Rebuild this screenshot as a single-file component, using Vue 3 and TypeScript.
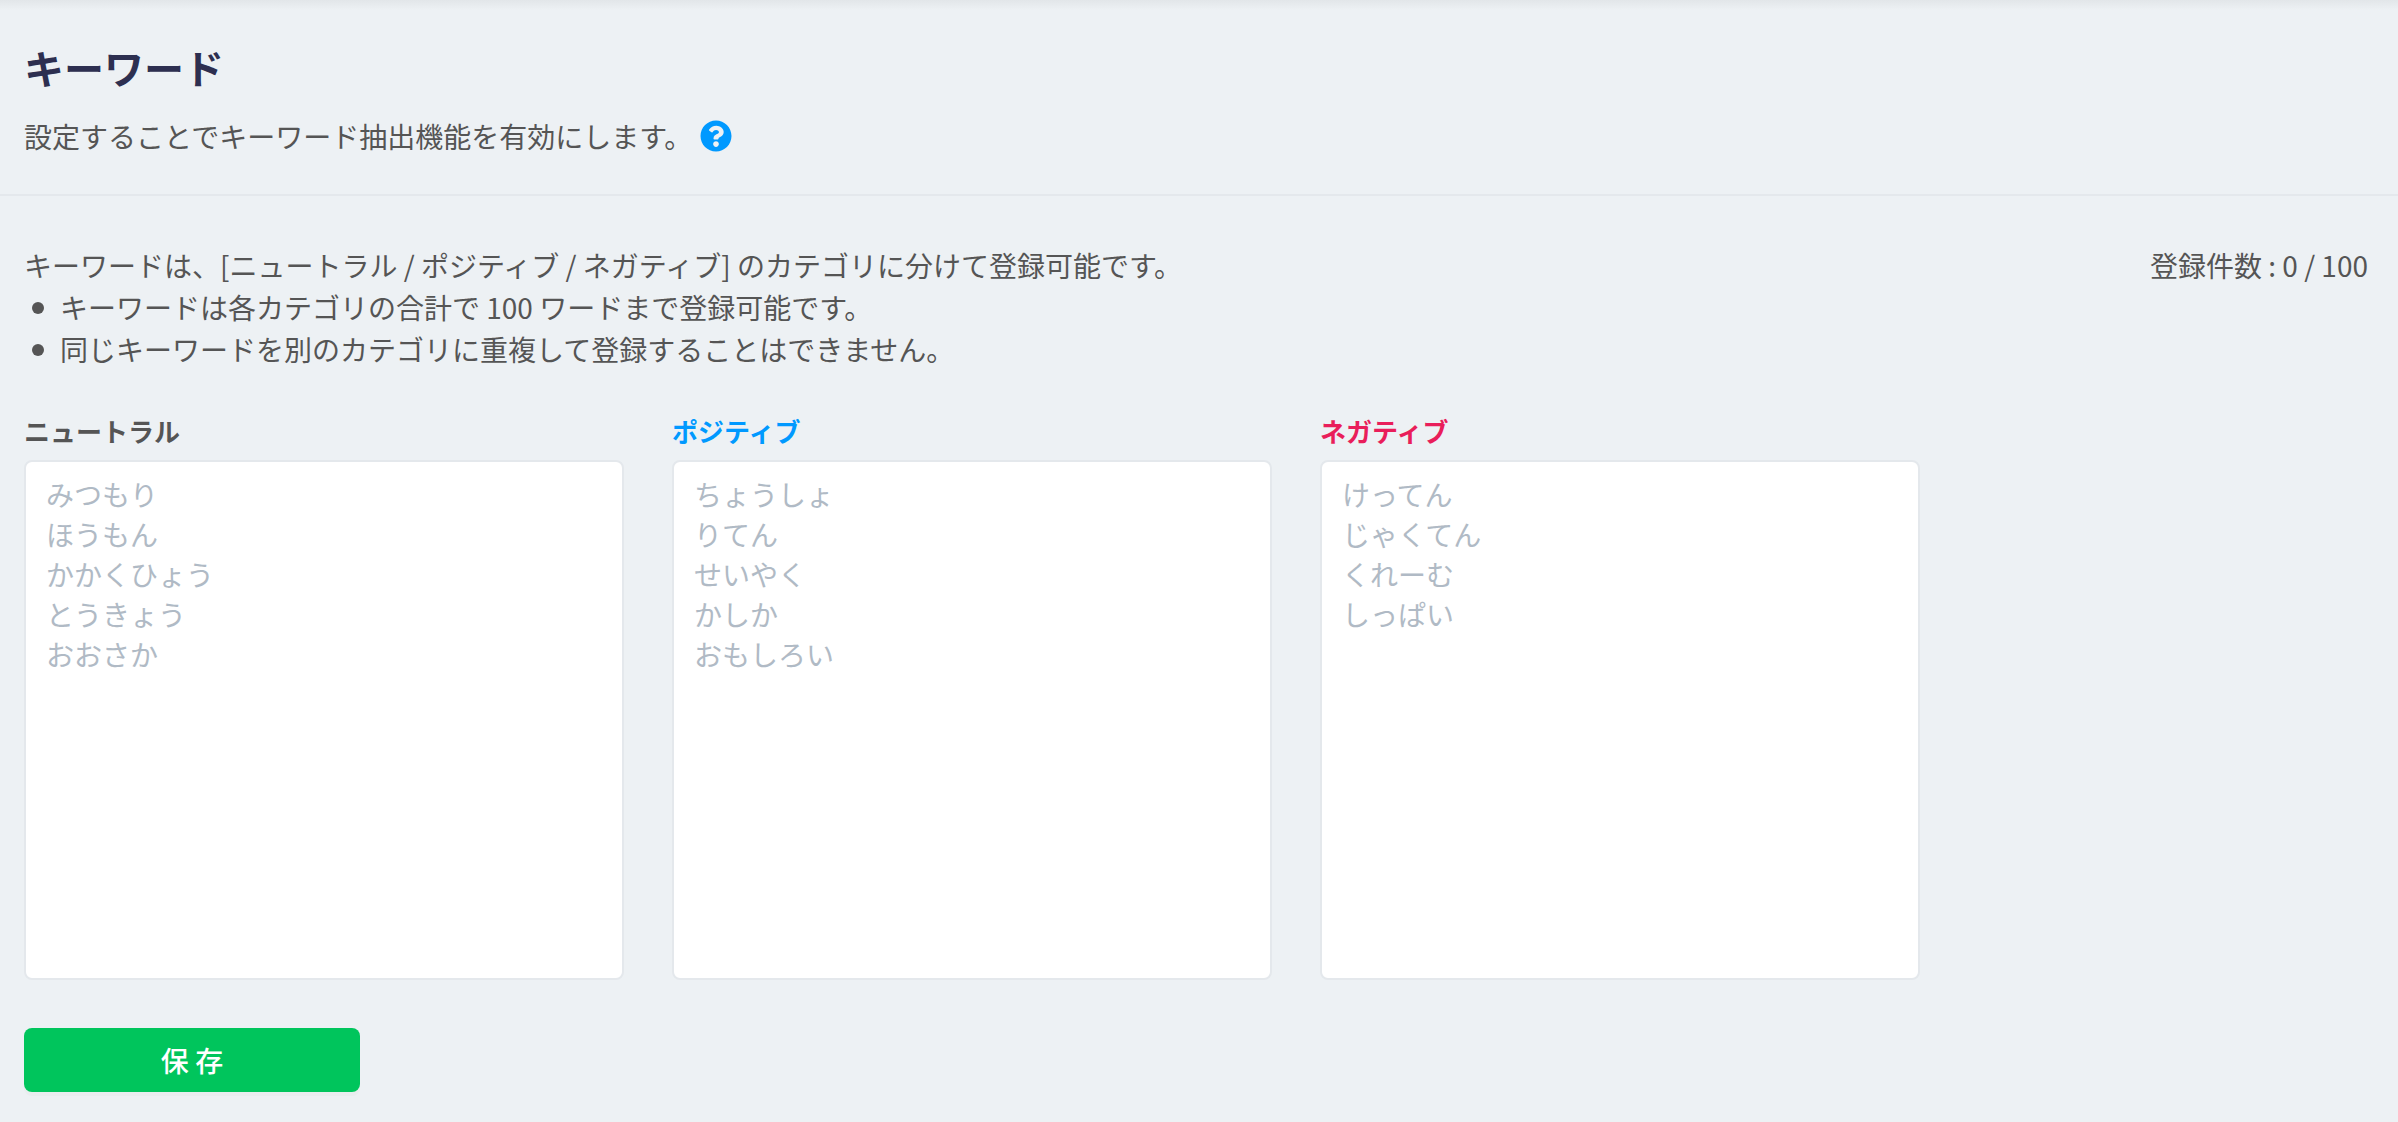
<script setup lang="ts">
import { reactive } from 'vue'

interface Category {
  id: string
  label: string
  placeholder: string
}

const categories: Category[] = [
  {
    id: 'neutral',
    label: 'ニュートラル',
    placeholder: ['みつもり', 'ほうもん', 'かかくひょう', 'とうきょう', 'おおさか'].join('\n'),
  },
  {
    id: 'positive',
    label: 'ポジティブ',
    placeholder: ['ちょうしょ', 'りてん', 'せいやく', 'かしか', 'おもしろい'].join('\n'),
  },
  {
    id: 'negative',
    label: 'ネガティブ',
    placeholder: ['けってん', 'じゃくてん', 'くれーむ', 'しっぱい'].join('\n'),
  },
]

const keywords = reactive<Record<string, string>>({ neutral: '', positive: '', negative: '' })
const limit = 100

function countWords(): number {
  return Object.values(keywords)
    .flatMap((text) => text.split('\n'))
    .filter((word) => word.trim() !== '').length
}
</script>

<template>
  <main class="page">
    <header class="page-header">
      <h1 class="title">キーワード</h1>
      <div class="lead">
        <p>設定することでキーワード抽出機能を有効にします。</p>
        <button type="button" class="help" aria-label="ヘルプ">
          <svg viewBox="0 0 512 512" aria-hidden="true">
            <path
              fill="currentColor"
              d="M504 256c0 137-111 248-248 248S8 393 8 256C8 119.100 119 8 256 8s248 111.100 248 248zM262.700 90c-54.500 0-89.300 23-116.500 63.800-3.500 5.300-2.400 12.400 2.700 16.300l34.700 26.300c5.200 3.900 12.600 3 16.700-2.100 17.900-22.700 30.100-35.800 57.300-35.800 20.400 0 45.700 13.100 45.700 33 0 15-12.400 22.700-32.500 34C247.100 238.500 216 254.900 216 296v4c0 6.600 5.400 12 12 12h56c6.600 0 12-5.400 12-12v-1.300c0-28.500 83.200-29.600 83.200-106.700 0-58-60.200-102-116.500-102zM256 338c-25.400 0-46 20.600-46 46 0 25.400 20.600 46 46 46s46-20.600 46-46c0-25.400-20.600-46-46-46z"
            />
          </svg>
        </button>
      </div>
    </header>

    <form class="content" @submit.prevent>
      <div class="notes">
        <div>
          <p>キーワードは、[ニュートラル / ポジティブ / ネガティブ] のカテゴリに分けて登録可能です。</p>
          <ul class="rules">
            <li>キーワードは各カテゴリの合計で 100 ワードまで登録可能です。</li>
            <li>同じキーワードを別のカテゴリに重複して登録することはできません。</li>
          </ul>
        </div>
        <p class="count">登録件数 : {{ countWords() }} / {{ limit }}</p>
      </div>

      <div class="categories">
        <div v-for="category in categories" :key="category.id" class="category">
          <label :for="category.id" :class="['category-label', category.id]">{{ category.label }}</label>
          <textarea
            :id="category.id"
            v-model="keywords[category.id]"
            class="category-input"
            :placeholder="category.placeholder"
          ></textarea>
        </div>
      </div>

      <button type="submit" class="save">保 存</button>
    </form>
  </main>
</template>

<style>
body {
  background: #edf1f4;
}
</style>

<style scoped>
.page {
  box-sizing: border-box;
  min-height: 100vh;
  color: #555;
  font-family: "Noto Sans CJK JP", sans-serif;
  font-size: 28px;
  line-height: 42px;
  background: #edf1f4 linear-gradient(#e2e6e9, #edf1f4) no-repeat top / 100% 10px;
}

h1,
p,
ul {
  margin: 0;
  padding: 0;
}

.page-header {
  padding: 37px 24px;
  border-bottom: 2px solid #e4e8ec;
}

.title {
  color: #2d2f50;
  font-size: 40px;
  font-weight: 700;
  line-height: 60px;
}

.lead {
  display: flex;
  align-items: center;
  gap: 8px;
  margin-top: 18px;
}

.help {
  width: 32px;
  height: 32px;
  padding: 0;
  border: 0;
  background: none;
  color: #0099ff;
  cursor: pointer;
}

.help svg {
  display: block;
  width: 100%;
  height: 100%;
}

.content {
  padding: 48px 24px 28px;
}

.notes {
  display: flex;
  justify-content: space-between;
  gap: 48px;
  padding-right: 6px;
}

.count {
  white-space: nowrap;
}

.rules {
  list-style: none;
}

.rules li {
  display: flex;
  align-items: center;
  gap: 16px;
  padding-left: 8px;
}

.rules li::before {
  content: "";
  flex: none;
  width: 12px;
  height: 12px;
  margin-top: 2px;
  border-radius: 50%;
  background: #555;
}

.categories {
  display: flex;
  gap: 48px;
  margin-top: 40px;
}

.category {
  display: flex;
  flex: 0 1 600px;
  flex-direction: column;
  gap: 8px;
  min-width: 0;
}

.category-label {
  font-size: 26px;
  font-weight: 700;
  line-height: 42px;
}

.positive {
  color: #0099ff;
}

.negative {
  color: #e91e5a;
}

.category-input {
  box-sizing: border-box;
  width: 100%;
  height: 520px;
  padding: 12px 20px;
  border: 2px solid #e4e8ec;
  border-radius: 8px;
  background: #fff;
  color: #555;
  font: inherit;
  line-height: 40px;
  resize: none;
}

.category-input::placeholder {
  color: #b0bac5;
  opacity: 1;
}

.save {
  display: block;
  width: 336px;
  height: 64px;
  margin-top: 48px;
  padding: 0;
  border: 0;
  border-radius: 8px;
  background: #00c55c;
  box-shadow: 0 4px 0 #e9edef;
  color: #fff;
  font: inherit;
  font-weight: 500;
  cursor: pointer;
}
</style>
